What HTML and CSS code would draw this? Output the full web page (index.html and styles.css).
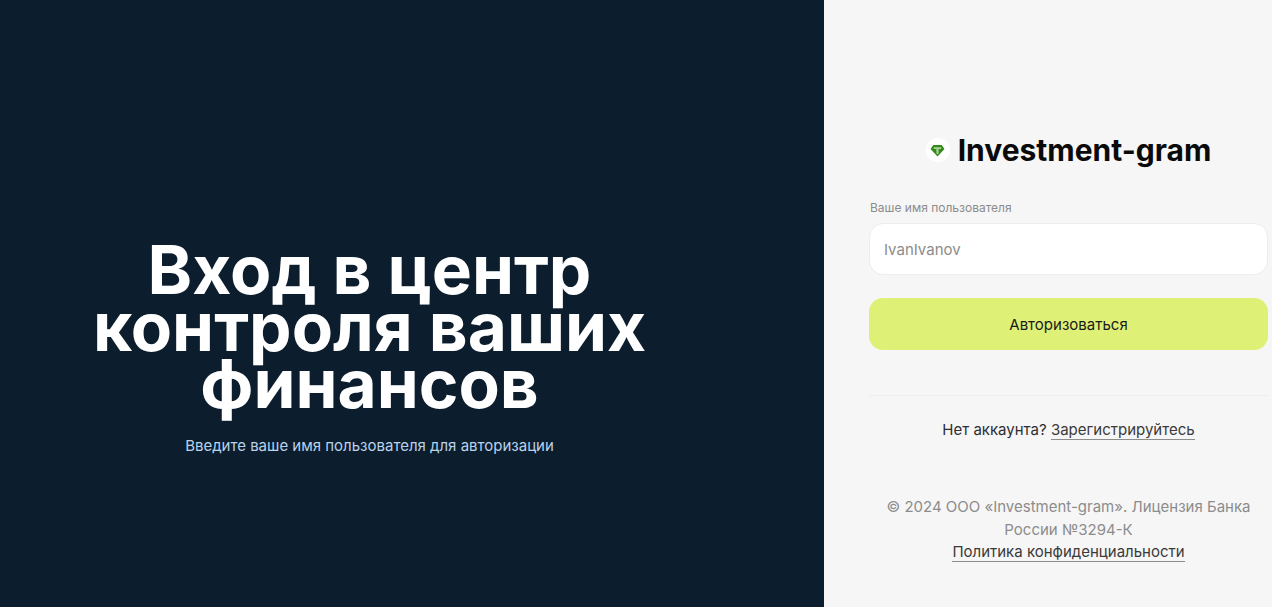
FILE: index.html
```html
<!DOCTYPE html>
<html lang="ru">
<head>
<meta charset="utf-8">
<title>Investment-gram</title>
<link rel="stylesheet" href="styles.css">
</head>
<body>
<main class="page">
  <section class="hero">
    <div class="hero-inner">
      <h1 class="hero-title">Вход в центр контроля ваших финансов</h1>
      <p class="hero-sub">Введите ваше имя пользователя для авторизации</p>
    </div>
  </section>
  <section class="side">
    <div class="logo">
      <span class="logo-badge">
        <svg viewBox="0 0 16 14" width="15" height="13"><path d="M3.5 1h9L15.5 5.5 8 13.5 .5 5.5z" fill="#348a1c"/><path d="M4 3.4h8v2H9.2V10L8 11.2 6.8 10V5.4H4z" fill="#a9d396"/></svg>
      </span>
      <span class="logo-text">Investment-gram</span>
    </div>
    <form class="form">
      <label class="label" for="u">Ваше имя пользователя</label>
      <input class="input" id="u" placeholder="IvanIvanov">
      <button class="btn" type="button">Авторизоваться</button>
    </form>
    <hr class="divider">
    <p class="signup">Нет аккаунта? <a href="#" class="link">Зарегистрируйтесь</a></p>
    <p class="legal">© 2024 ООО «Investment-gram». Лицензия Банка России №3294-К<br><a href="#" class="link">Политика конфиденциальности</a></p>
  </section>
</main>
</body>
</html>
```
FILE: styles.css
```css
* { box-sizing: border-box; }
html, body { margin: 0; height: 100%; }
body { font-family: Inter, "Liberation Sans", sans-serif; background: #f6f6f6; overflow: hidden; }
.page { display: flex; height: 607px; }
.hero { width: 824px; background: #0c1d2e; display: flex; align-items: center; justify-content: center; padding: 91px 85px 0 0; }
.hero-inner { text-align: center; width: 570px; }
.hero-title { margin: 0; font-size: 67.5px; line-height: 57px; font-weight: 700; color: #fff; }
.hero-sub { margin: 23px 0 0; font-size: 15px; line-height: 22px; color: #b8d3ea; }
.side { flex: 1; padding: 0 4px 0 45px; display: flex; flex-direction: column; }
.logo { display: flex; align-items: center; justify-content: center; gap: 8px; margin-top: 130px; height: 40px; }
.logo-badge { width: 24px; height: 24px; border-radius: 50%; background: #fff; display: flex; align-items: center; justify-content: center; }
.logo-text { font-size: 30px; font-weight: 700; color: #0a0a0a; }
.form { display: flex; flex-direction: column; margin-top: 30px; }
.label { font-size: 12px; line-height: 16px; color: #8c8c8c; padding-left: 1px; }
.input { margin-top: 7px; height: 52px; border: 1px solid #ededed; border-radius: 14px; background: #fff; padding: 0 14px; font: 15px Inter, sans-serif; }
.input::placeholder { color: #8c8c8c; opacity: 1; }
.btn { margin-top: 23px; height: 52px; border: 0; border-radius: 14px; background: #dff076; font: 15px Inter, sans-serif; color: #1a1a1a; }
.divider { width: 100%; border: 0; border-top: 1px solid #ededed; margin: 45px 0 0; }
.signup { margin: 23px 0 0; text-align: center; font-size: 15px; line-height: 22px; color: #2d2d33; }
.legal { margin: 55px 0 0; text-align: center; font-size: 15px; line-height: 22.5px; color: #8c8c8c; }
.link { color: #3a3a3a; text-decoration: none; border-bottom: 1px solid #8c8c8c; }
```
